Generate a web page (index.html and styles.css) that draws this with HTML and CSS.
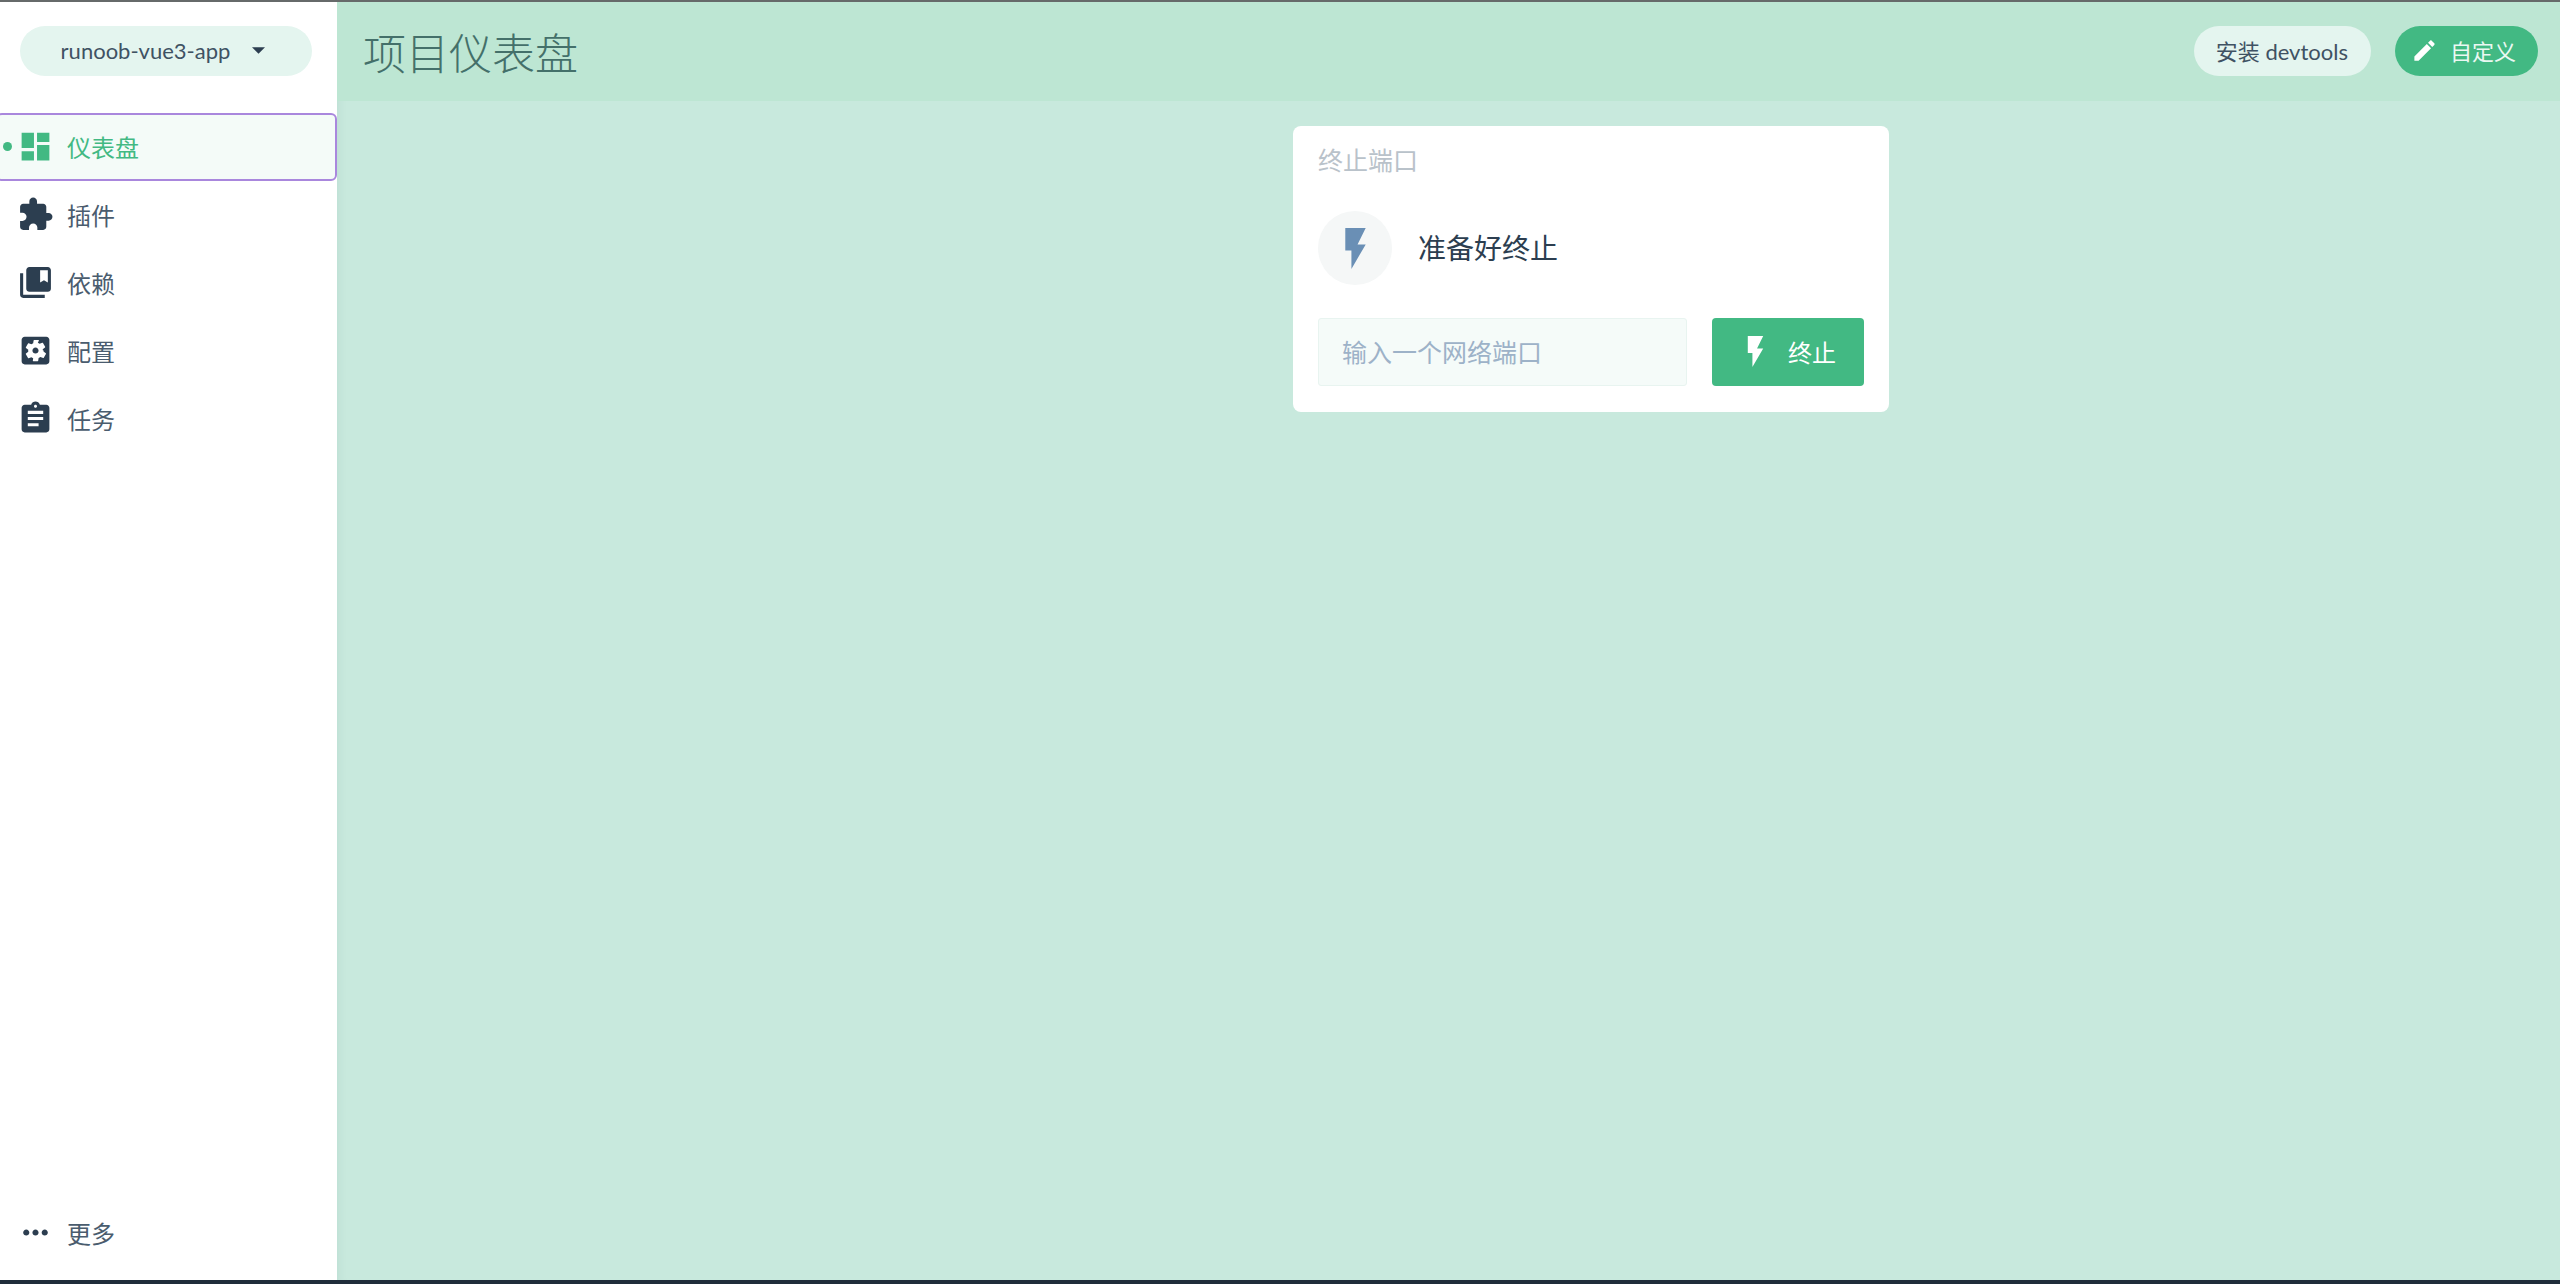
FILE: index.html
```html
<!DOCTYPE html>
<html lang="zh-CN">
<head>
    <meta charset="UTF-8">
    <title>项目仪表盘</title>
    <link rel="stylesheet" href="styles.css">
</head>
<body>
    <div class="app">
        <!-- Left side -->
        <aside class="sidebar">
            <div class="project-wrap">
                <div class="project-select">
                    <span>runoob-vue3-app</span>
                    <svg class="caret" viewBox="7 10 10 5"><path d="M7 10l5 5 5-5z"/></svg>
                </div>
            </div>
            <nav class="nav">
                <a class="nav-item active">
                    <span class="dot"></span>
                    <svg class="nav-icon" viewBox="0 0 24 24"><path d="M3 13h8V3H3v10zm0 8h8v-6H3v6zm10 0h8V11h-8v10zm0-18v6h8V3h-8z"/></svg>
                    <span>仪表盘</span>
                </a>
                <a class="nav-item">
                    <svg class="nav-icon" viewBox="0 0 24 24"><path d="M20.5 11H19V7c0-1.1-.9-2-2-2h-4V3.5C13 2.12 11.88 1 10.5 1S8 2.12 8 3.5V5H4c-1.1 0-1.99.9-1.99 2v3.8H3.5c1.49 0 2.7 1.21 2.7 2.7s-1.21 2.7-2.7 2.7H2V20c0 1.1.9 2 2 2h3.8v-1.5c0-1.49 1.21-2.7 2.7-2.7 1.49 0 2.7 1.21 2.7 2.7V22H17c1.1 0 2-.9 2-2v-4h1.5c1.38 0 2.5-1.12 2.5-2.5S21.88 11 20.5 11z"/></svg>
                    <span>插件</span>
                </a>
                <a class="nav-item">
                    <svg class="nav-icon" viewBox="0 0 24 24"><path d="M4 6H2v14c0 1.1.9 2 2 2h14v-2H4V6z"/><path d="M20 2H8c-1.1 0-2 .9-2 2v12c0 1.1.9 2 2 2h12c1.1 0 2-.9 2-2V4c0-1.1-.9-2-2-2zm0 10l-2.5-1.5L15 12V4h5v8z"/></svg>
                    <span>依赖</span>
                </a>
                <a class="nav-item">
                    <svg class="nav-icon" viewBox="0 0 24 24"><path d="M12 10c-1.1 0-2 .9-2 2s.9 2 2 2 2-.9 2-2-.9-2-2-2zm7-7H5c-1.11 0-2 .9-2 2v14c0 1.1.89 2 2 2h14c1.11 0 2-.9 2-2V5c0-1.1-.89-2-2-2zm-1.75 9c0 .23-.02.46-.05.68l1.48 1.16c.13.11.17.3.08.45l-1.4 2.42c-.09.15-.27.21-.43.15l-1.74-.7c-.36.28-.76.51-1.18.69l-.26 1.85c-.03.17-.18.3-.35.3h-2.8c-.17 0-.32-.13-.35-.3L10.5 17c-.42-.18-.82-.41-1.18-.69l-1.74.7c-.16.06-.34 0-.43-.15l-1.4-2.42c-.09-.15-.05-.34.08-.45l1.48-1.16c-.03-.23-.05-.46-.05-.68 0-.23.02-.46.05-.68l-1.48-1.16c-.13-.11-.17-.3-.08-.45l1.4-2.42c.09-.15.27-.21.43-.15l1.74.7c.36-.28.76-.51 1.18-.69l.26-1.85c.03-.17.18-.3.35-.3h2.8c.17 0 .32.13.35.3L13.5 7c.42.18.82.41 1.18.69l1.74-.7c.16-.06.34 0 .43.15l1.4 2.42c.09.15.05.34-.08.45l-1.48 1.16c.03.23.05.46.05.68z"/></svg>
                    <span>配置</span>
                </a>
                <a class="nav-item">
                    <svg class="nav-icon" viewBox="0 0 24 24"><path d="M19 3h-4.18C14.4 1.84 13.3 1 12 1c-1.3 0-2.4.84-2.82 2H5c-1.1 0-2 .9-2 2v14c0 1.1.9 2 2 2h14c1.1 0 2-.9 2-2V5c0-1.1-.9-2-2-2zm-7 0c.55 0 1 .45 1 1s-.45 1-1 1-1-.45-1-1 .45-1 1-1zm2 14H7v-2h7v2zm3-4H7v-2h10v2zm0-4H7V7h10v2z"/></svg>
                    <span>任务</span>
                </a>
            </nav>
            <div class="nav-bottom">
                <a class="nav-item">
                    <svg class="nav-icon" viewBox="0 0 24 24"><path d="M6 10c-1.1 0-2 .9-2 2s.9 2 2 2 2-.9 2-2-.9-2-2-2zm12 0c-1.1 0-2 .9-2 2s.9 2 2 2 2-.9 2-2-.9-2-2-2zm-6 0c-1.1 0-2 .9-2 2s.9 2 2 2 2-.9 2-2-.9-2-2-2z"/></svg>
                    <span>更多</span>
                </a>
            </div>
        </aside>

        <!-- Main area -->
        <main class="content">
            <header class="topbar">
                <h1>项目仪表盘</h1>
                <div class="topbar-actions">
                    <button class="pill pill-light">安装 devtools</button>
                    <button class="pill pill-green">
                        <svg class="pencil" viewBox="0 0 24 24"><path d="M3 17.25V21h3.75L17.81 9.94l-3.75-3.75L3 17.25zM20.71 7.04c.39-.39.39-1.02 0-1.41l-2.34-2.34c-.39-.39-1.02-.39-1.41 0l-1.83 1.83 3.75 3.75 1.83-1.83z"/></svg>
                        <span>自定义</span>
                    </button>
                </div>
            </header>

            <section class="card">
                <div class="card-title">终止端口</div>
                <div class="status">
                    <div class="status-icon">
                        <svg class="bolt" viewBox="0 0 24 24"><path d="M7 2v11h3v9l7-12h-4l4-8z"/></svg>
                    </div>
                    <div class="status-text">准备好终止</div>
                </div>
                <div class="kill-form">
                    <input class="port-input" type="text" placeholder="输入一个网络端口">
                    <button class="kill-btn">
                        <svg class="bolt-small" viewBox="0 0 24 24"><path d="M7 2v11h3v9l7-12h-4l4-8z"/></svg>
                        <span>终止</span>
                    </button>
                </div>
            </section>
        </main>
    </div>
</body>
</html>
```

FILE: styles.css
```css
* {
    box-sizing: border-box;
}

body {
    margin: 0;
    font-family: Lato, "Noto Sans CJK SC", sans-serif;
    color: #2c3e50;
    background-color: #c8e9dd;
    overflow: hidden;
}

.app {
    display: flex;
    height: 100vh;
    border-top: 2px solid #666a6a;
    border-bottom: 4px solid #1f2d3a;
}

/* Sidebar */
.sidebar {
    display: flex;
    flex-direction: column;
    flex: 0 0 337px;
    background-color: #fff;
    overflow: hidden;
}

.project-wrap {
    height: 111px;
    padding: 24px 25px 0 20px;
}

.project-select {
    display: flex;
    align-items: center;
    justify-content: center;
    gap: 22px;
    height: 50px;
    padding: 0 6px 2px 0;
    border-radius: 25px;
    background-color: #e4f5ef;
    font-size: 22px;
    color: #3f5263;
}

.caret {
    width: 13px;
    height: 7px;
    fill: #2c3e50;
}

.nav-item {
    display: flex;
    align-items: center;
    gap: 13px;
    position: relative;
    height: 68px;
    margin-left: -4px;
    padding: 0 0 2px 19px;
    border: 2px solid transparent;
    border-radius: 6px;
    font-size: 24px;
    color: #4a5c6e;
}

.nav-icon {
    width: 37px;
    height: 37px;
    fill: #2c3e50;
}

.nav-item.active {
    border-color: #a987dd;
    background-color: #f4fbf8;
    color: #42b983;
}

.nav-item.active .nav-icon {
    fill: #42b983;
}

.dot {
    position: absolute;
    left: 5px;
    top: 27px;
    width: 9px;
    height: 9px;
    border-radius: 50%;
    background-color: #42b983;
}

.nav-bottom {
    margin-top: auto;
    padding-bottom: 13px;
}

/* Main area */
.content {
    flex: 1;
    box-shadow: inset 12px 0 12px -12px rgba(44, 62, 80, 0.08);
}

.topbar {
    display: flex;
    align-items: center;
    justify-content: space-between;
    height: 99px;
    padding: 0 22px 2px 26px;
    background-color: #bde6d3;
}

.topbar h1 {
    margin: 0;
    font-size: 43px;
    font-weight: 300;
    color: #44706a;
}

.topbar-actions {
    display: flex;
    gap: 24px;
}

.pill {
    display: flex;
    align-items: center;
    height: 50px;
    padding-bottom: 2px;
    border: none;
    border-radius: 25px;
    font-family: inherit;
    font-size: 22px;
}

.pill-light {
    padding-left: 22px;
    padding-right: 23px;
    background-color: #e4f5ef;
    color: #3f5263;
}

.pill-green {
    gap: 12px;
    padding-left: 16px;
    padding-right: 22px;
    background-color: #42b983;
    color: #eaf8f2;
}

.pencil {
    width: 27px;
    height: 27px;
    fill: #fff;
}

/* Kill port card */
.card {
    width: 596px;
    height: 286px;
    margin: 25px 0 0 956px;
    padding: 18px 25px 0;
    border-radius: 8px;
    background-color: #fff;
}

.card-title {
    font-size: 25px;
    line-height: 32px;
    color: #b9c2ca;
}

.status {
    display: flex;
    align-items: center;
    gap: 26px;
    margin-top: 35px;
}

.status-icon {
    display: flex;
    align-items: center;
    justify-content: center;
    width: 74px;
    height: 74px;
    border-radius: 50%;
    background-color: #f5f7f7;
}

.bolt {
    width: 49px;
    height: 49px;
    fill: #6a8fb5;
}

.status-text {
    font-size: 28px;
    padding-bottom: 2px;
}

.kill-form {
    display: flex;
    gap: 25px;
    margin-top: 33px;
}

.port-input {
    width: 369px;
    height: 68px;
    padding: 0 23px;
    border: 1px solid #e8f4f0;
    border-radius: 3px;
    background-color: #f5fbf9;
    font-family: inherit;
    font-size: 25px;
    color: #2c3e50;
}

.port-input::placeholder {
    color: #9db2c8;
    opacity: 1;
}

.kill-btn {
    display: flex;
    align-items: center;
    justify-content: center;
    gap: 14px;
    width: 152px;
    height: 68px;
    padding: 0 3px 2px 0;
    border: none;
    border-radius: 4px;
    background-color: #42b983;
    font-family: inherit;
    font-size: 24px;
    color: #fff;
}

.bolt-small {
    width: 37px;
    height: 37px;
    fill: #fff;
}
```
